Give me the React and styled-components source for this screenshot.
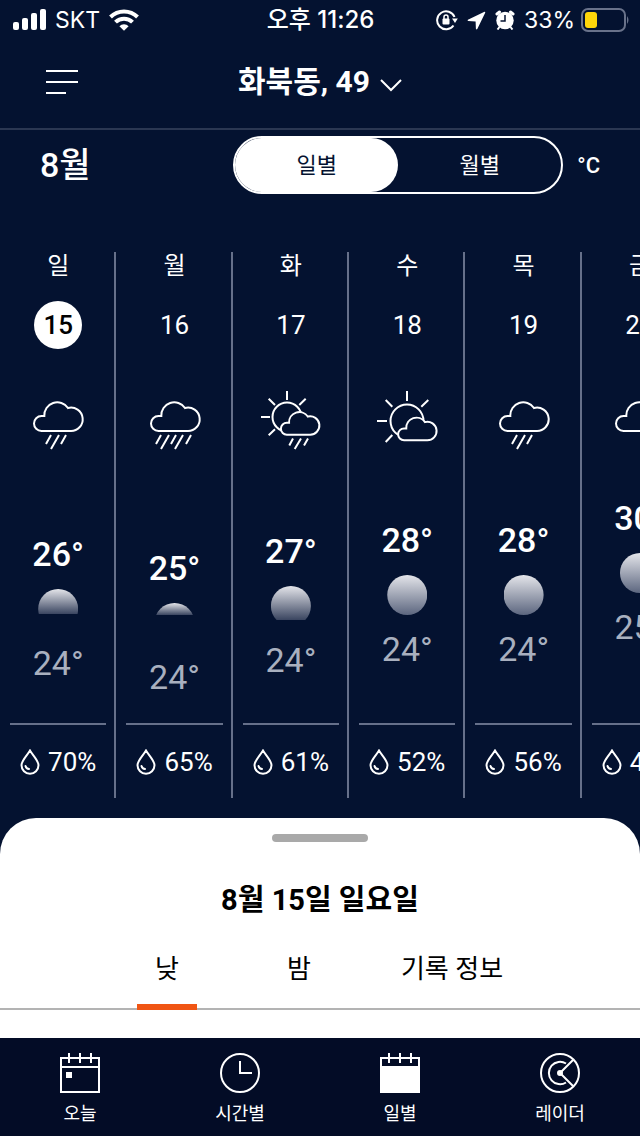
import React, { useState } from 'react';
import styled, { createGlobalStyle } from 'styled-components';

const navy = '#041230';

const GlobalStyle = createGlobalStyle`
    * {
        box-sizing: border-box;
    }

    body {
        margin: 0;
        background: ${navy};
        color: #fff;
        font-family: Roboto, "Noto Sans CJK KR", sans-serif;
    }

    button {
        margin: 0;
        padding: 0;
        border: 0;
        background: none;
        color: inherit;
        font: inherit;
        cursor: pointer;
    }

    svg {
        display: block;
        flex: none;
    }
`;

const Screen = styled.div`
    display: flex;
    flex-direction: column;
    min-height: 100vh;
`;

const StatusBar = styled.div`
    display: grid;
    grid-template-columns: 1fr auto 1fr;
    align-items: center;
    height: 40px;
    padding: 0 11px 0 12px;
    font-family: Inter, "Noto Sans CJK KR", sans-serif;
    font-size: 23px;
    line-height: 24px;
`;

const StatusGroup = styled.div`
    display: flex;
    align-items: center;
    gap: 9px;
    justify-content: ${props => props.$end ? 'flex-end' : 'flex-start'};
`;

const Clock = styled.time`
    font-size: 24px;
    font-weight: 500;
`;

const Battery = styled.div`
    display: flex;
    align-items: center;
    gap: 6px;
`;

const Header = styled.header`
    display: grid;
    grid-template-columns: 1fr auto 1fr;
    align-items: center;
    height: 90px;
    padding: 0 46px 4px;
    border-bottom: 2px solid #2b3752;
`;

const MenuButton = styled.button`
    justify-self: start;
`;

const LocationButton = styled.button`
    display: flex;
    align-items: center;
    gap: 10px;
    font-size: 30px;
    font-weight: 700;
    line-height: 40px;
`;

const Toolbar = styled.div`
    display: flex;
    align-items: center;
    height: 70px;
    padding: 0 40px;
`;

const Month = styled.h1`
    margin: 0 auto 0 0;
    font-size: 34px;
    font-weight: 500;
    line-height: 40px;
`;

const Segments = styled.div`
    display: flex;
    flex: 0 1 330px;
    height: 58px;
    border: 2px solid #fff;
    border-radius: 29px;
`;

const Segment = styled.button`
    flex: 1;
    padding-bottom: 4px;
    border-radius: 27px;
    background: ${props => props.$active ? '#fff' : 'transparent'};
    color: ${props => props.$active ? navy : '#fff'};
    font-size: 22px;
`;

const UnitButton = styled.button`
    margin-left: 14px;
    font-size: 22px;
    font-weight: 500;
`;

const Days = styled.main`
    display: flex;
    margin: 40px 0 20px;
    padding-top: 12px;
    overflow-x: auto;
    scrollbar-width: none;
`;

const Day = styled.section`
    display: flex;
    flex: 0 0 calc(100% / 5.5);
    flex-direction: column;
    align-items: center;
    height: 546px;
    padding: 0 8px 0 10px;
    border-right: 2px solid #66708a;
`;

const DayName = styled.h2`
    margin: 0 0 21px;
    font-size: 24px;
    font-weight: 400;
    line-height: 28px;
`;

const DateCircle = styled.button`
    width: 48px;
    height: 48px;
    margin-bottom: 39px;
    border-radius: 50%;
    background: ${props => props.$active ? '#fff' : 'transparent'};
    color: ${props => props.$active ? '#000' : '#fff'};
    font-size: 26px;
    font-weight: ${props => props.$active ? 500 : 400};
    line-height: 46px;
`;

const Range = styled.div`
    display: flex;
    flex: 1;
    flex-direction: column;
    align-items: center;
    align-self: stretch;
    padding-top: ${props => props.$drop}px;
    border-bottom: 2px solid #66708a;
`;

const Temperature = styled.span`
    color: ${props => props.$low ? '#a9b0bf' : '#fff'};
    font-size: 34px;
    font-weight: ${props => props.$low ? 400 : 500};
    line-height: 40px;
`;

const BallSlot = styled.div`
    width: 40px;
    height: 40px;
    margin: 15px 0 14px;
`;

const Ball = styled.div`
    height: ${props => props.$visible}px;
    background: linear-gradient(#e4e5ea, ${props => props.$visible < 40 ? '#3a4560' : '#5c667f'});
    clip-path: circle(20px at 20px 20px);
`;

const Rain = styled.div`
    display: flex;
    align-items: center;
    gap: 8px;
    height: 73px;
    font-size: 26px;
    line-height: 32px;
`;

const Sheet = styled.section`
    display: flex;
    flex: 1;
    flex-direction: column;
    align-items: center;
    padding-top: 16px;
    border-radius: 36px 36px 0 0;
    background: #fff;
    color: #000;
`;

const Handle = styled.div`
    width: 96px;
    height: 8px;
    border-radius: 4px;
    background: #a9a9a9;
`;

const SheetTitle = styled.h2`
    margin: 38px 0 26px;
    font-size: 29px;
    font-weight: 700;
    line-height: 40px;
`;

const Tabs = styled.div`
    display: flex;
    justify-content: center;
    align-self: stretch;
    border-bottom: 2px solid #b3b3b3;
`;

const Tab = styled.button`
    display: flex;
    flex-direction: column;
    align-items: center;
    justify-content: space-between;
    min-width: 132px;
    height: 64px;
    margin-bottom: -2px;
    padding: 0 36px;
    font-size: 26px;
    line-height: 46px;

    &::after {
        content: '';
        width: 60px;
        height: 6px;
        background: ${props => props.$active ? '#f05514' : 'transparent'};
    }
`;

const BottomNav = styled.nav`
    display: flex;
    height: 98px;
    background: #030c26;
`;

const NavLink = styled.a`
    display: flex;
    flex: 1;
    flex-direction: column;
    align-items: center;
    gap: 8px;
    padding-top: 15px;
    color: #fff;
    font-size: 18px;
    line-height: 26px;
    text-decoration: none;
`;

const Cloud = ({ transform, strokeWidth = 2 }) => (
    <path
        d="M15.5 43a7.5 7.5 0 0 1 0-15h2.8A13 13 0 0 1 42 20A11.7 11.7 0 1 1 44.5 43Z"
        transform={transform}
        strokeWidth={strokeWidth}
        fill={navy}
    />
);

const weatherShapes = {
    cloud: <Cloud />,
    rain: (
        <>
            <Cloud />
            <path d="M25 47l-5 9M33 47l-8 14M40 47l-5 9" />
        </>
    ),
    heavyRain: (
        <>
            <Cloud />
            <path d="M18 47l-5 9M26 47l-8 14M33 47l-5 9M40 47l-8 14M48 47l-5 9" />
        </>
    ),
    sunRain: (
        <>
            <circle cx="28" cy="29" r="14.5" />
            <path d="M28 3v9M2 29h9M9.7 10.7l6.3 6.3M46.7 10.7l-6.4 6.3M9.7 47.3l6.3-6" />
            <Cloud transform="translate(15.6 12.7) scale(.79)" strokeWidth={2.5} />
            <path d="M34 50.5l-3.7 7M42 50.5L35.7 61M49 50.5l-4 7" />
        </>
    ),
    sunCloud: (
        <>
            <circle cx="32" cy="33" r="16.5" />
            <path d="M32 3v10M2 33h10M10.7 12l6.6 6.7M53.3 12l-7 6.7M10.7 54l6.6-7" />
            <Cloud transform="translate(16.8 18.3) scale(.79)" strokeWidth={2.5} />
        </>
    )
};

const WeatherIcon = ({ type }) => (
    <svg width="64" height="64" viewBox="0 0 64 64" fill="none" stroke="#fff" strokeWidth="2">
        {weatherShapes[type]}
    </svg>
);

const DropIcon = () => (
    <svg width="20" height="26" viewBox="0 0 20 26" fill="none" stroke="#fff" strokeWidth="2">
        <path d="M10 1.5C7 6.5 1.5 11.5 1.5 16.3A8.5 8.5 0 0 0 18.5 16.3C18.5 11.5 13 6.5 10 1.5Z" />
        <path d="M5.5 17a4 4 0 0 0 3.5 3" strokeLinecap="round" />
    </svg>
);

const SignalIcon = () => (
    <svg width="34" height="22" viewBox="0 0 34 22" fill="#fff">
        <rect x="1" y="13" width="6" height="8" rx="2" />
        <rect x="10" y="9" width="6" height="12" rx="2" />
        <rect x="19" y="4" width="6" height="17" rx="2" />
        <rect x="28" y="0" width="6" height="21" rx="2" />
    </svg>
);

const WifiIcon = () => (
    <svg width="30" height="22" viewBox="0 0 30 22" fill="none" stroke="#fff" strokeWidth="4">
        <path d="M1.5 8a19.2 19.2 0 0 1 27 0" />
        <path d="M6.5 13.2a12 12 0 0 1 17 0" />
        <path d="M15 21.8l-4.6-4.6a6.5 6.5 0 0 1 9.2 0z" fill="#fff" stroke="none" />
    </svg>
);

const LockIcon = () => (
    <svg width="22" height="22" viewBox="0 0 22 22" fill="none" stroke="#fff" strokeWidth="2">
        <path d="M18.5 8A9 9 0 1 0 17.5 16.5" />
        <path d="M16 9.5h5.8l-2.8 4.5z" fill="#fff" stroke="none" />
        <rect x="6.5" y="9.5" width="7" height="6" rx="1" fill="#fff" stroke="none" />
        <path d="M8 10V8a2 2 0 0 1 4 0v2" strokeWidth="1.5" />
    </svg>
);

const ArrowIcon = () => (
    <svg width="19" height="19" viewBox="0 0 19 19" fill="#fff">
        <path d="M17.5.8q1-.1.7 1L10.3 18q-.9 1-1.400-.2L8.600 10.400L1.200 10.100Q0 9.600.9 8.700z" />
    </svg>
);

const AlarmIcon = () => (
    <svg width="20" height="20" viewBox="0 0 20 20">
        <circle cx="10" cy="10.5" r="8.7" fill="#fff" />
        <path d="M2 4L4.5 2M18 4L15.5 2" stroke="#fff" strokeWidth="3" strokeLinecap="round" />
        <path d="M4.5 17l-2 2.5M15.5 17l2 2.5" stroke="#fff" strokeWidth="2" />
        <path d="M10 5v6H5.5" stroke={navy} strokeWidth="1.5" fill="none" />
    </svg>
);

const BatteryIcon = () => (
    <svg width="48" height="24" viewBox="0 0 48 24" fill="none">
        <rect x="1" y="1" width="43" height="22" rx="6" stroke="#69728a" strokeWidth="2" />
        <rect x="4" y="4" width="12" height="16" rx="3" fill="#ffd60a" />
        <path d="M46 8q3 4 0 8z" fill="#69728a" />
    </svg>
);

const MenuIcon = () => (
    <svg width="32" height="26" viewBox="0 0 32 26" stroke="#fff" strokeWidth="2">
        <path d="M0 2h32M0 13h32M0 24h20" />
    </svg>
);

const ChevronIcon = () => (
    <svg width="22" height="22" viewBox="0 0 22 22" fill="none" stroke="#fff" strokeWidth="2">
        <path d="M1 9l10 10L21 9" />
    </svg>
);

const navShapes = {
    today: (
        <>
            <path d="M1 5h38v34H1zM1 14h38M9 0v10M20 0v10M31 0v10" />
            <path d="M6 19h6v6H6z" fill="#fff" stroke="none" />
        </>
    ),
    hourly: (
        <>
            <circle cx="20" cy="20" r="19" />
            <path d="M20 8v12h12" />
        </>
    ),
    daily: (
        <>
            <path d="M1 5h38v34H1zM9 0v10M20 0v10M31 0v10" />
            <path d="M1 14h38v25H1z" fill="#fff" />
        </>
    ),
    radar: (
        <>
            <circle cx="20" cy="20" r="19" />
            <path d="M26 10.5a11.2 11.2 0 1 0 0 19M33.5 6.5L20 20l13.5 13.5" />
            <circle cx="20" cy="20" r="2" fill="#fff" />
        </>
    )
};

const NavIcon = ({ type }) => (
    <svg width="40" height="40" viewBox="0 0 40 40" fill="none" stroke="#fff" strokeWidth="2">
        {navShapes[type]}
    </svg>
);

const days = [
    { name: '일', date: 15, weather: 'rain', high: 26, low: 24, rain: 70, drop: 82, visible: 25 },
    { name: '월', date: 16, weather: 'heavyRain', high: 25, low: 24, rain: 65, drop: 96, visible: 12 },
    { name: '화', date: 17, weather: 'sunRain', high: 27, low: 24, rain: 61, drop: 79, visible: 34 },
    { name: '수', date: 18, weather: 'sunCloud', high: 28, low: 24, rain: 52, drop: 68, visible: 40 },
    { name: '목', date: 19, weather: 'rain', high: 28, low: 24, rain: 56, drop: 68, visible: 40 },
    { name: '금', date: 20, weather: 'cloud', high: 30, low: 25, rain: 43, drop: 46, visible: 40 }
];

const links = [
    { type: 'today', label: '오늘' },
    { type: 'hourly', label: '시간별' },
    { type: 'daily', label: '일별' },
    { type: 'radar', label: '레이더' }
];

const App = () => {
    const [period, setPeriod] = useState('일별');
    const [selected, setSelected] = useState(0);
    const [tab, setTab] = useState('낮');

    return (
        <Screen>
            <GlobalStyle />
            <StatusBar>
                <StatusGroup>
                    <SignalIcon />
                    <span>SKT</span>
                    <WifiIcon />
                </StatusGroup>
                <Clock>오후 11:26</Clock>
                <StatusGroup $end>
                    <LockIcon />
                    <ArrowIcon />
                    <AlarmIcon />
                    <Battery>
                        <span>33%</span>
                        <BatteryIcon />
                    </Battery>
                </StatusGroup>
            </StatusBar>
            <Header>
                <MenuButton aria-label="메뉴"><MenuIcon /></MenuButton>
                <LocationButton>
                    화북동, 49
                    <ChevronIcon />
                </LocationButton>
            </Header>
            <Toolbar>
                <Month>8월</Month>
                <Segments>
                    {['일별', '월별'].map(name =>
                        <Segment key={name} $active={period === name} aria-pressed={period === name} onClick={() => setPeriod(name)}>
                            {name}
                        </Segment>
                    )}
                </Segments>
                <UnitButton>°C</UnitButton>
            </Toolbar>
            <Days>
                {days.map((day, index) =>
                    <Day key={day.date}>
                        <DayName>{day.name}</DayName>
                        <DateCircle $active={index === selected} onClick={() => setSelected(index)}>{day.date}</DateCircle>
                        <WeatherIcon type={day.weather} />
                        <Range $drop={day.drop}>
                            <Temperature>{day.high}°</Temperature>
                            <BallSlot><Ball $visible={day.visible} /></BallSlot>
                            <Temperature $low>{day.low}°</Temperature>
                        </Range>
                        <Rain>
                            <DropIcon />
                            {day.rain}%
                        </Rain>
                    </Day>
                )}
            </Days>
            <Sheet>
                <Handle />
                <SheetTitle>8월 {days[selected].date}일 {days[selected].name}요일</SheetTitle>
                <Tabs role="tablist">
                    {['낮', '밤', '기록 정보'].map(name =>
                        <Tab key={name} role="tab" $active={tab === name} aria-selected={tab === name} onClick={() => setTab(name)}>
                            {name}
                        </Tab>
                    )}
                </Tabs>
            </Sheet>
            <BottomNav>
                {links.map(link =>
                    <NavLink key={link.type} href={`#${link.type}`}>
                        <NavIcon type={link.type} />
                        {link.label}
                    </NavLink>
                )}
            </BottomNav>
        </Screen>
    );
};

export default App;
